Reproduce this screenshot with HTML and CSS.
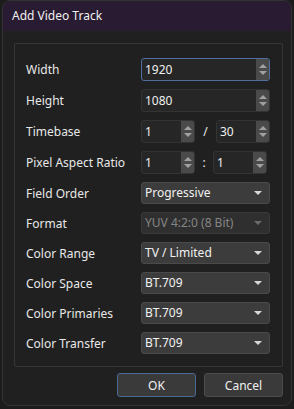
FILE: index.html
```html
<!DOCTYPE html>
<html lang="en">
<head>
  <meta charset="UTF-8">
  <title>Add Video Track</title>
  <link rel="stylesheet" href="styles.css">
</head>
<body>
  <div class="dialog">
    <div class="titlebar">Add Video Track</div>

    <div class="content">
      <div class="group">
        <div class="row">
          <label>Width</label>
          <div class="spin focused"><span class="value">1920</span><span class="arrows"></span></div>
        </div>
        <div class="row">
          <label>Height</label>
          <div class="spin"><span class="value">1080</span><span class="arrows"></span></div>
        </div>
        <div class="row">
          <label>Timebase</label>
          <div class="pair">
            <div class="spin small"><span class="value">1</span><span class="arrows"></span></div>
            <span class="sep">/</span>
            <div class="spin small"><span class="value">30</span><span class="arrows"></span></div>
          </div>
        </div>
        <div class="row">
          <label>Pixel Aspect Ratio</label>
          <div class="pair par">
            <div class="spin small"><span class="value">1</span><span class="arrows"></span></div>
            <span class="sep">:</span>
            <div class="spin small"><span class="value">1</span><span class="arrows"></span></div>
          </div>
        </div>
        <div class="row combo-row">
          <label>Field Order</label>
          <div class="combo">Progressive</div>
        </div>
        <div class="row combo-row">
          <label>Format</label>
          <div class="combo disabled">YUV 4:2:0 (8 Bit)</div>
        </div>
        <div class="row combo-row">
          <label>Color Range</label>
          <div class="combo">TV / Limited</div>
        </div>
        <div class="row combo-row">
          <label>Color Space</label>
          <div class="combo">BT.709</div>
        </div>
        <div class="row combo-row">
          <label>Color Primaries</label>
          <div class="combo">BT.709</div>
        </div>
        <div class="row combo-row">
          <label>Color Transfer</label>
          <div class="combo">BT.709</div>
        </div>
      </div>

      <div class="buttons">
        <button class="default">OK</button>
        <button>Cancel</button>
      </div>
    </div>
  </div>
</body>
</html>
```

FILE: styles.css
```css
body {
  margin: 0;
  background-color: #1c1c1c;
  font-family: "Noto Sans", "Open Sans", sans-serif;
  font-size: 12px;
  color: #e8e8e8;
}

.dialog {
  margin: 0 2px 0 2px;
  width: 290px;
  height: 406px;
  box-sizing: border-box;
  background-color: #202020;
  border: 1px solid #333;
  border-radius: 8px;
  overflow: hidden;
  display: flex;
  flex-direction: column;
}

.titlebar {
  height: 30px;
  line-height: 30px;
  padding-left: 9px;
  background-color: #291b31;
  color: #f0f0f0;
  font-size: 12px;
}

.content {
  padding: 12px 8px 0 11px;
  display: flex;
  flex-direction: column;
}

.group {
  border: 1px solid #363636;
  border-radius: 2px;
  padding: 14px 12px 12px 11px;
  display: flex;
  flex-direction: column;
  gap: 8px;
}

.row {
  display: flex;
  align-items: center;
  height: 23px;
}

.row.combo-row {
  height: 22px;
}

.row label {
  width: 115px;
  flex: none;
}

.spin {
  flex: 1;
  height: 23px;
  box-sizing: border-box;
  display: flex;
  background-color: #262626;
  border: 1px solid #333;
  border-radius: 3px;
  overflow: hidden;
}

.spin.focused {
  border-color: #4f6f9c;
}

.spin .value {
  flex: 1;
  padding-left: 3px;
  line-height: 21px;
  color: #f0f0f0;
}

.spin .arrows {
  width: 13px;
  background-color: #4a4a4a;
  position: relative;
}

.spin .arrows::before,
.spin .arrows::after {
  content: "";
  position: absolute;
  left: 3px;
  border-left: 4px solid transparent;
  border-right: 4px solid transparent;
}

.spin .arrows::before {
  top: 5px;
  border-bottom: 4px solid #a0a0a0;
}

.spin .arrows::after {
  bottom: 5px;
  border-top: 4px solid #a0a0a0;
}

.pair {
  flex: 1;
  display: flex;
  align-items: center;
}

.pair .spin.small {
  flex: none;
  width: 54px;
}

.pair .sep {
  width: 21px;
  text-align: center;
  color: #e8e8e8;
}

.pair.par .sep {
  width: 18px;
}

.combo {
  flex: 1;
  height: 22px;
  box-sizing: border-box;
  line-height: 20px;
  padding-left: 3px;
  background-color: #3c3c3c;
  border: 1px solid #4a4a4a;
  border-radius: 3px;
  color: #f2f2f2;
  position: relative;
}

.combo::after {
  content: "";
  position: absolute;
  right: 7px;
  top: 8px;
  border-left: 4px solid transparent;
  border-right: 4px solid transparent;
  border-top: 4px solid #d8d8d8;
}

.combo.disabled {
  background-color: #2f2f2f;
  border-color: #3a3a3a;
  color: #858585;
}

.combo.disabled::after {
  border-top-color: #6a6a6a;
}

.buttons {
  display: flex;
  justify-content: flex-end;
  gap: 8px;
  margin-top: 6px;
}

.buttons button {
  width: 79px;
  height: 24px;
  background-color: #3a3a3a;
  border: 1px solid #4c4c4c;
  border-radius: 3px;
  color: #f0f0f0;
  font-family: inherit;
  font-size: 12px;
  padding: 0;
}

.buttons button.default {
  border-color: #4a6a96;
}
```
